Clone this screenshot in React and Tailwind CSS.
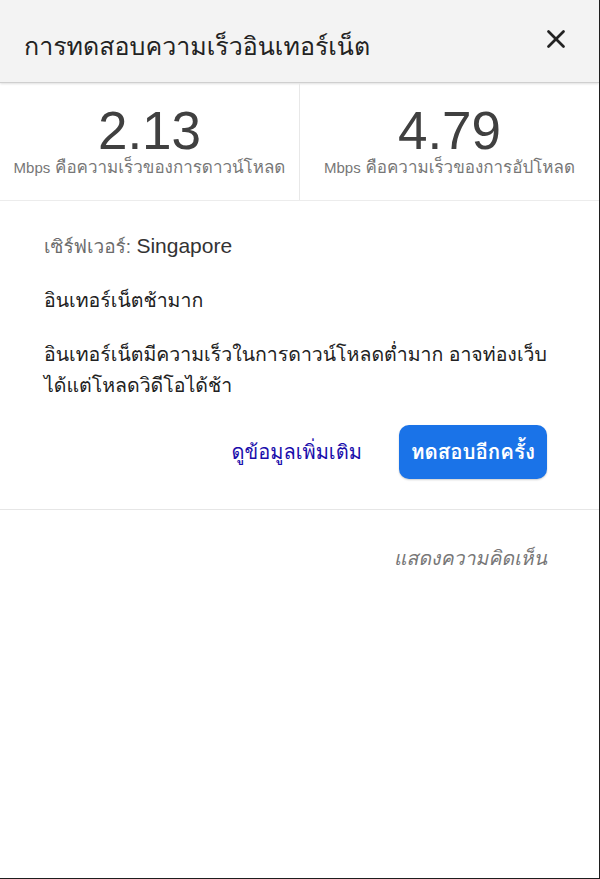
import { X } from 'lucide-react';

const font = { fontFamily: '"Liberation Sans", Waree, Tahoma, Loma, "Noto Sans Thai", "Noto Sans", sans-serif' };

function Stat({ value, label, border }) {
  return (
    <div className={'flex-1 flex flex-col items-center pt-[20px] ' + (border ? 'border-r border-[#e8e8e8]' : '')}>
      <div className="text-[53px] leading-[56px] text-[#404040]">{value}</div>
      <div className="text-[17px] leading-[22px] text-[#777] mt-[-2px] whitespace-nowrap">
        <span className="text-[15px]">Mbps</span> {label}
      </div>
    </div>
  );
}

export default function App() {
  return (
    <div style={font} className="w-[600px] h-[879px] bg-white border-r border-b border-[#1e1e1e] flex flex-col overflow-hidden">
      <div className="h-[83px] shrink-0 bg-[#f3f3f3] border-b border-[#cfcfcf] shadow-[0_1px_2px_rgba(0,0,0,0.12)] flex items-center justify-between pl-[24px] pr-[28px]">
        <h1 className="text-[25px] text-[#222] leading-none mt-[10px]">การทดสอบความเร็วอินเทอร์เน็ต</h1>
        <X size={30} strokeWidth={2.2} className="text-[#222] mt-[-4px]" />
      </div>

      <div className="flex h-[118px] shrink-0 border-b border-[#ececec]">
        <Stat value="2.13" label="คือความเร็วของการดาวน์โหลด" border />
        <Stat value="4.79" label="คือความเร็วของการอัปโหลด" />
      </div>

      <div className="px-[44px] pt-[31px] pb-[30px] border-b border-[#e6e6e6] shrink-0">
        <p className="text-[19px] leading-[28px] text-[#333]">
          <span className="text-[#6b6b6b]">เซิร์ฟเวอร์: </span>
          <span className="text-[21px]">Singapore</span>
        </p>
        <p className="text-[19.5px] leading-[28px] text-[#222] mt-[25px]">อินเทอร์เน็ตช้ามาก</p>
        <p className="text-[19.5px] leading-[31px] text-[#222] mt-[25px]">
          อินเทอร์เน็ตมีความเร็วในการดาวน์โหลดต่ำมาก อาจท่องเว็บ
          <br />
          ได้แต่โหลดวิดีโอได้ช้า
        </p>
        <div className="flex items-center justify-end gap-[37px] mt-[24px] pr-[8px]">
          <span className="text-[20px] text-[#1a0dab]">ดูข้อมูลเพิ่มเติม</span>
          <button className="h-[54px] px-[12px] rounded-[10px] bg-[#1a73e8] text-white text-[20.5px] font-bold shadow-[0_1px_2px_rgba(0,0,0,0.2)]">
            ทดสอบอีกครั้ง
          </button>
        </div>
      </div>

      <div className="flex justify-end pr-[52px] pt-[34px]">
        <span className="italic text-[19.5px] text-[#777]">แสดงความคิดเห็น</span>
      </div>
    </div>
  );
}
